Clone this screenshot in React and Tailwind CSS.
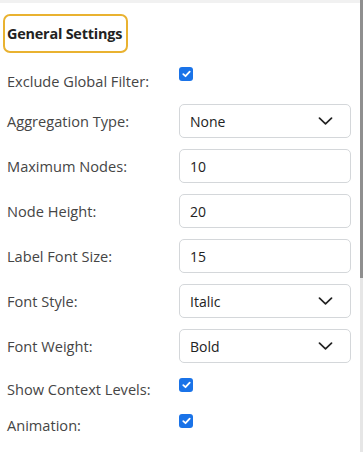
import React from "react";

const font = { fontFamily: "'Open Sans', 'Noto Sans', sans-serif" };

function Chevron() {
  return (
    <svg width="15" height="8" viewBox="0 0 15 8" fill="none" className="shrink-0">
      <path d="M1.5 1.2 L7.5 6.8 L13.5 1.2" stroke="#222" strokeWidth="1.7" strokeLinecap="round" strokeLinejoin="round" />
    </svg>
  );
}

function Check() {
  return (
    <div className="w-[14px] h-[14px] rounded-[3px] bg-[#1a73e8] flex items-center justify-center shrink-0">
      <svg width="9" height="8" viewBox="0 0 9 8" fill="none">
        <path d="M1.3 4.2 L3.5 6.2 L7.7 1.6" stroke="white" strokeWidth="1.8" strokeLinecap="round" strokeLinejoin="round" />
      </svg>
    </div>
  );
}

function CheckRow({ label, mt, lt }) {
  return (
    <div className={`flex items-start ${mt}`}>
      <div className={`w-[172px] text-[14.6px] leading-[20px] text-[#454545] ${lt}`}>{label}</div>
      <Check />
    </div>
  );
}

function FieldRow({ label, value, select }) {
  return (
    <div className="flex items-center h-[34px]">
      <div className="w-[172px] text-[14.6px] leading-[20px] text-[#454545]">{label}</div>
      <div className="w-[172px] h-[34px] border border-[#d4d7da] rounded-[5px] flex items-center justify-between pl-[10px] pr-[17px] text-[14px] text-[#222]">
        <span>{value}</span>
        {select && <Chevron />}
      </div>
    </div>
  );
}

export default function App() {
  return (
    <div className="w-[363px] h-[452px] bg-white flex overflow-hidden" style={font}>
      <div className="flex-1 flex flex-col">
        <div className="h-[3px] bg-[#f1f1f1]" />
        <div className="pl-[3px] mt-[11px]">
          <div className="w-[125px] h-[39px] border-2 border-[#e9b230] rounded-[7px] flex items-center pl-[2px] text-[14.4px] font-bold text-[#222] tracking-[-0.2px]">
            General Settings
          </div>
        </div>
        <div className="pl-[7px] flex flex-col">
          <div className="flex items-start mt-[14px]">
            <div className="w-[172px] text-[14.6px] leading-[20px] text-[#454545] mt-[4px]">Exclude Global Filter:</div>
            <Check />
          </div>
          <div className="flex flex-col gap-[11px] mt-[13px]">
            <FieldRow label="Aggregation Type:" value="None" select />
            <FieldRow label="Maximum Nodes:" value="10" />
            <FieldRow label="Node Height:" value="20" />
            <FieldRow label="Label Font Size:" value="15" />
            <FieldRow label="Font Style:" value="Italic" select />
            <FieldRow label="Font Weight:" value="Bold" select />
          </div>
          <CheckRow label="Show Context Levels:" mt="mt-[15px]" lt="mt-[1px]" />
          <CheckRow label="Animation:" mt="mt-[15px]" lt="mt-[1px]" />
        </div>
      </div>
      <div className="w-[3px] flex flex-col">
        <div className="h-[278px] bg-[#8f8f8f]" />
        <div className="flex-1 bg-[#e6e6e6]" />
      </div>
    </div>
  );
}
